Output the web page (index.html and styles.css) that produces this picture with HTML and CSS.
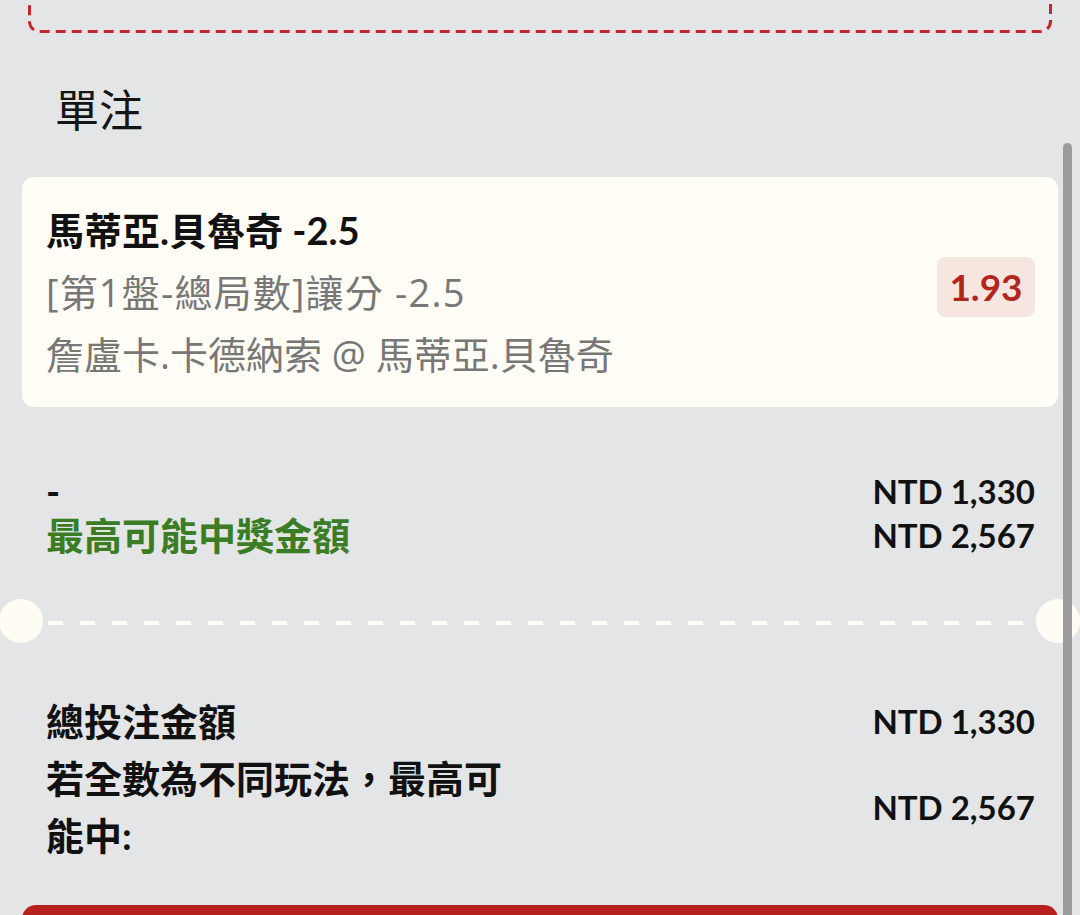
FILE: index.html
```html
<!DOCTYPE html>
<html lang="zh-Hant">
<head>
    <meta charset="UTF-8">
    <meta name="viewport" content="width=device-width, initial-scale=1.0">
    <title>單注</title>
    <link rel="stylesheet" href="styles.css">
</head>
<body>
<div id="slip">
    <div class="promo">
        <svg class="promo-border" width="1024" height="80" viewBox="0 0 1024 80">
            <rect x="1.5" y="1.5" width="1021" height="77" rx="10" ry="10" fill="none" stroke="#c3262c" stroke-width="3" stroke-dasharray="10 6"/>
        </svg>
    </div>

    <h2 class="slip-title">單注</h2>

    <div class="bet-card">
        <div class="bet-info">
            <div class="bet-pick">馬蒂亞.貝魯奇 -2.5</div>
            <div class="bet-market">[第1盤-總局數]讓分 -2.5</div>
            <div class="bet-match">詹盧卡.卡德納索 @ 馬蒂亞.貝魯奇</div>
        </div>
        <div class="bet-odds">1.93</div>
    </div>

    <div class="summary">
        <div class="summary-left">
            <div>-</div>
            <div class="win">最高可能中獎金額</div>
        </div>
        <div class="summary-right">
            <div>NTD 1,330</div>
            <div>NTD 2,567</div>
        </div>
    </div>

    <div class="ticket-cut">
        <span class="notch notch-left"></span>
        <span class="cut-line"></span>
        <span class="notch notch-right"></span>
    </div>

    <div class="totals">
        <div class="total-row">
            <div class="total-label">總投注金額</div>
            <div class="total-value">NTD 1,330</div>
        </div>
        <div class="total-row">
            <div class="total-label">若全數為不同玩法，最高可能中:</div>
            <div class="total-value">NTD 2,567</div>
        </div>
    </div>

    <button class="place-bet"></button>

    <div class="scroll-thumb"></div>
</div>
</body>
</html>
```

FILE: styles.css
```css
*{margin: 0;padding: 0;box-sizing: border-box;}
html,body{height: 100%;overflow: hidden;}
body{
    background: #e4e5e7;
    font-family: "Lato", "Noto Sans CJK TC", sans-serif;
    color: #111111;
}
#slip{
    position: relative;
    display: flow-root;
    padding: 0 22px;
    min-height: 100%;
}

/* dashed promo box, mostly scrolled out of view */
.promo{
    position: relative;
    width: 1024px;
    height: 80px;
    margin: -47px 0 0 6px;
}
.promo-border{
    position: absolute;
    left: 0;
    top: 0;
}

.slip-title{
    font-family: "Noto Sans CJK TC", sans-serif;
    font-size: 44px;
    font-weight: 400;
    line-height: 60px;
    margin-top: 45px;
    padding-left: 33px;
    color: #151515;
}

.bet-card{
    margin-top: 39px;
    height: 230px;
    padding: 22px 23px 22px 24px;
    background: #fffdf5;
    border-radius: 12px;
    display: flex;
    align-items: center;
    justify-content: space-between;
}
.bet-info{
    font-size: 38px;
    line-height: 62px;
    align-self: flex-start;
}
.bet-pick{
    font-weight: 700;
    color: #111111;
}
.bet-market,.bet-match{
    font-family: "Open Sans", "Noto Sans CJK TC", sans-serif;
    color: #777777;
}
.bet-market{letter-spacing: 1.2px;}
.bet-odds{
    background: #f6e6df;
    color: #b3261e;
    font-weight: 700;
    font-size: 37px;
    width: 98px;
    height: 60px;
    line-height: 60px;
    text-align: center;
    border-radius: 8px;
    margin-top: -10px;
}

.summary{
    margin-top: 62px;
    padding: 0 23px 0 24px;
    display: flex;
    justify-content: space-between;
    font-weight: 700;
    line-height: 44px;
}
.summary-left{font-size: 38px;}
.summary-left .win{color: #3b7d24;}
.summary-right{font-size: 33px;text-align: right;}

.ticket-cut{
    position: relative;
    margin: 42px -22px 0;
    height: 44px;
    display: flex;
    align-items: center;
}
.cut-line{
    flex: 1;
    height: 4px;
    margin: 4px 46px 0 48px;
    background: repeating-linear-gradient(90deg, #fffef8 0 15px, transparent 15px 32px);
}
.notch{
    position: absolute;
    top: 0;
    width: 44px;
    height: 44px;
    border-radius: 50%;
    background: #fffdf3;
}
.notch-left{left: -1px;}
.notch-right{right: 0;}

.totals{
    margin-top: 50px;
    padding: 0 23px 0 24px;
    font-weight: 700;
}
.total-row{
    display: flex;
    justify-content: space-between;
    align-items: center;
}
.total-label{
    font-size: 38px;
    line-height: 57px;
    max-width: 480px;
}
.total-value{
    font-size: 33px;
    line-height: 57px;
}

.place-bet{
    display: block;
    width: 100%;
    height: 120px;
    margin-top: 41px;
    border: none;
    border-radius: 14px;
    background: #b8221e;
}

.scroll-thumb{
    position: absolute;
    left: 1063px;
    top: 143px;
    width: 9px;
    height: 900px;
    border-radius: 5px;
    background: #9b9b9d;
}
```
